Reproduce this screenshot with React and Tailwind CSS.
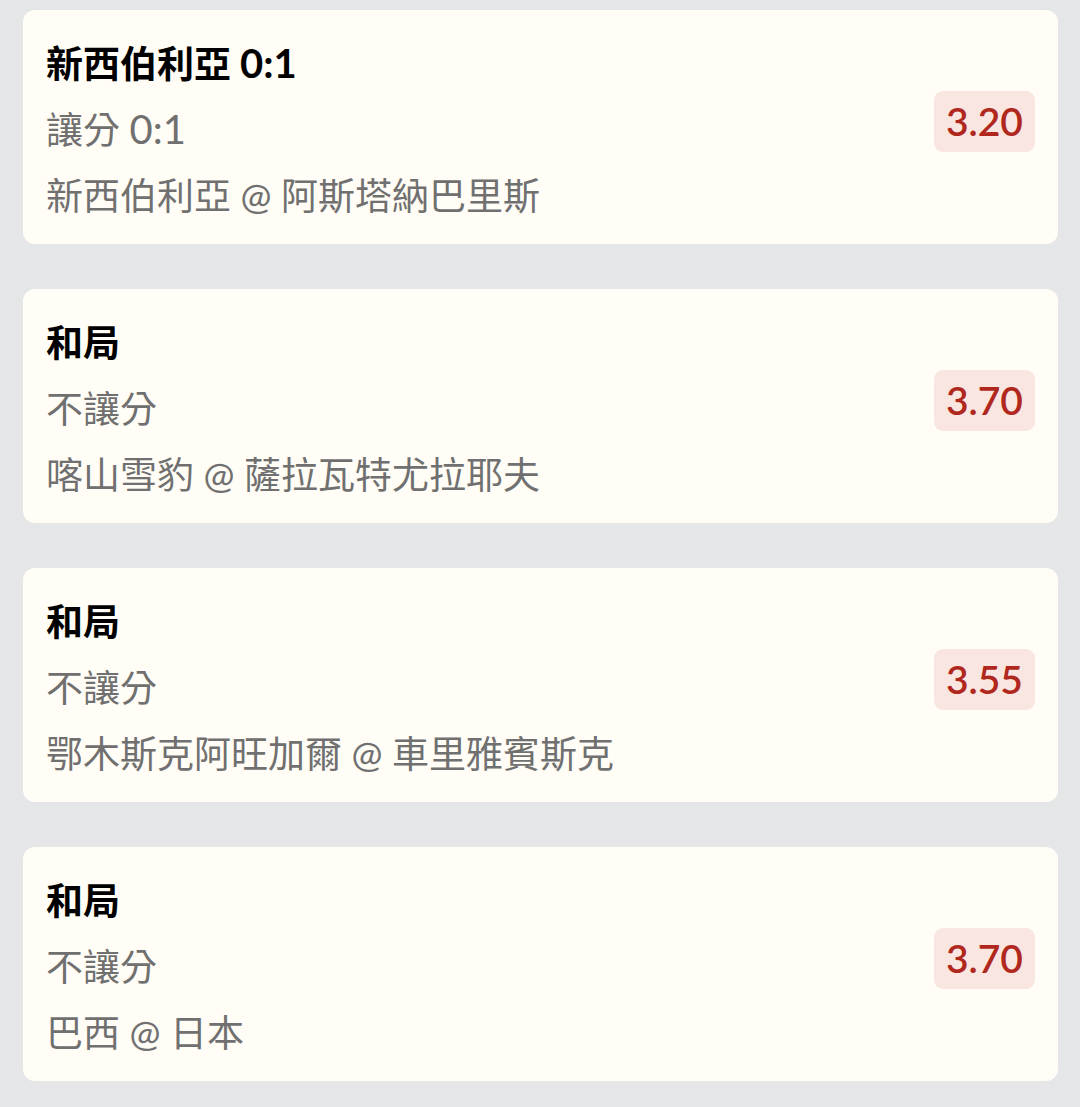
import React from 'react'

const BETS = [
  { pick: '新西伯利亞 0:1', market: '讓分 0:1', match: '新西伯利亞 @ 阿斯塔納巴里斯', odds: '3.20' },
  { pick: '和局', market: '不讓分', match: '喀山雪豹 @ 薩拉瓦特尤拉耶夫', odds: '3.70' },
  { pick: '和局', market: '不讓分', match: '鄂木斯克阿旺加爾 @ 車里雅賓斯克', odds: '3.55' },
  { pick: '和局', market: '不讓分', match: '巴西 @ 日本', odds: '3.70' },
]

// digits render a touch larger than the CJK text around them
function Mixed({ text }) {
  return text.split(/(\d[\d:.]*)/).map((part, i) =>
    /^\d/.test(part) ? (
      <span key={i} className="text-[40px] leading-none">{part}</span>
    ) : (
      <React.Fragment key={i}>{part}</React.Fragment>
    )
  )
}

function BetCard({ pick, market, match, odds }) {
  return (
    <div className="flex h-[234px] items-center justify-between rounded-[12px] bg-[#fffdf5] pl-[23px] pr-[23px] pt-[21px] pb-[15px]">
      <div className="flex flex-col leading-[66px] text-[37px]">
        <span className="h-[66px] font-bold text-black"><Mixed text={pick} /></span>
        <span className="h-[66px] text-[#707070]"><Mixed text={market} /></span>
        <span className="h-[66px] text-[#707070]">{match}</span>
      </div>
      <div className="mb-[18px] flex h-[61px] items-center rounded-[9px] bg-[#f9e6e0] px-[12px] text-[39px] font-semibold text-[#b0271d]">
        {odds}
      </div>
    </div>
  )
}

export default function App() {
  return (
    <div
      className="min-h-[1107px] w-[1080px] bg-[#e5e6e8] pl-[23px] pr-[22px] pt-[10px] flex flex-col gap-[45px]"
      style={{ fontFamily: 'Lato, "Noto Sans CJK TC", sans-serif' }}
    >
      {BETS.map((b, i) => (
        <BetCard key={i} {...b} />
      ))}
    </div>
  )
}
